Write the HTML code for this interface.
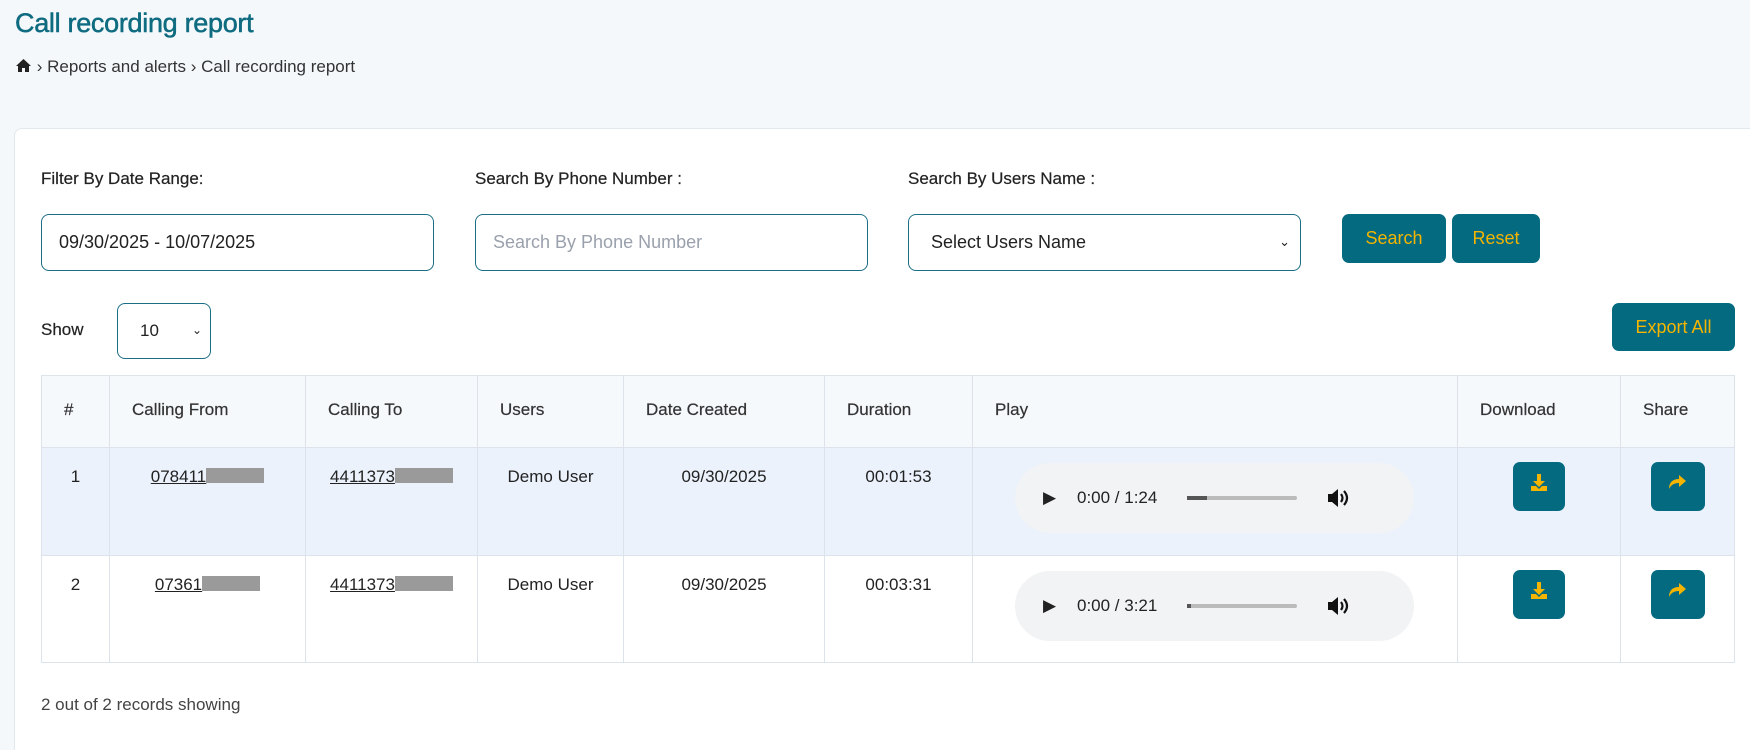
<!DOCTYPE html>
<html style="height:750px;overflow:hidden"><head><style>
*{box-sizing:border-box;margin:0;padding:0}
body{width:1750px;height:750px;background:#f4f8fb;font-family:"Liberation Sans",sans-serif;color:#222;position:relative;overflow:hidden}
.abs{position:absolute}
h1{position:absolute;left:15px;top:8px;font-size:27px;font-weight:normal;color:#0f6b80;letter-spacing:-0.3px;-webkit-text-stroke:0.5px #0f6b80}
.bc{position:absolute;left:15px;top:57px;font-size:17px;color:#333}
.card{position:absolute;left:14px;top:128px;width:1760px;height:622px;background:#fff;border:1px solid #e3e8ee;border-bottom:none;border-radius:8px 8px 0 0}
.lbl{position:absolute;font-size:17px;color:#222;top:169px;-webkit-text-stroke:0.2px #222}
.inp{position:absolute;top:214px;height:57px;width:393px;border:1.5px solid #1b6e84;border-radius:8px;font-size:18px;padding:0 17px;line-height:54px}
.btn{position:absolute;background:#036a80;color:#f4b400;border-radius:7px;font-size:18px;text-align:center}
table{position:absolute;left:41px;top:375px;width:1694px;border-collapse:collapse;font-size:17px}
td,th{border:1px solid #dde3ea;vertical-align:top}
th{background:#f5f9fc;height:72px;font-weight:normal;text-align:left;padding:24px 0 0 22px;color:#333;-webkit-text-stroke:0.2px #333}
td{padding-top:19px;text-align:center}
tr.r1 td{background:#ebf2fc;height:108px}
tr.r2 td{height:107px}
a{color:#222;text-decoration:underline}
.blur{display:inline-block;width:58px;height:15px;background:#9a9a9a;vertical-align:-1px}
.aud{margin:0 0 0 42px;width:399px;height:70px;border-radius:35px;background:#f1f3f4;position:relative;top:-4px;font-size:17px;text-align:left}
.ib{display:inline-block;width:52px;height:49px;background:#036a80;border-radius:7px;margin-top:-5px}
</style></head><body>
<h1>Call recording report</h1>
<div class="bc"><svg width="17" height="15" viewBox="0 0 17 15" style="vertical-align:-1px"><path d="M8.5 1L1 8h2v6h4v-4h3v4h4V8h2z" fill="#222"/></svg> › Reports and alerts › Call recording report</div>
<div class="card"></div>
<div class="lbl" style="left:41px">Filter By Date Range:</div>
<div class="lbl" style="left:475px">Search By Phone Number :</div>
<div class="lbl" style="left:908px">Search By Users Name :</div>
<div class="inp" style="left:41px">09/30/2025 - 10/07/2025</div>
<div class="inp" style="left:475px;color:#9aa0ac">Search By Phone Number</div>
<div class="inp" style="left:908px;padding-left:22px">Select Users Name<span style="position:absolute;right:10px;font-size:13px">&#8964;</span></div>
<div class="btn" style="left:1342px;top:214px;width:104px;height:49px;line-height:49px">Search</div>
<div class="btn" style="left:1452px;top:214px;width:88px;height:49px;line-height:49px">Reset</div>
<div class="btn" style="left:1612px;top:303px;width:123px;height:48px;line-height:48px">Export All</div>
<div class="abs" style="left:41px;top:320px;font-size:17px;-webkit-text-stroke:0.2px #222">Show</div>
<div class="abs" style="left:117px;top:303px;width:94px;height:56px;border:1.5px solid #1b6e84;border-radius:8px;font-size:17px;line-height:53px;padding-left:22px">10<span style="position:absolute;right:8px;font-size:12px">&#8964;</span></div>
<table>
<tr><th style="width:68px">#</th><th style="width:196px">Calling From</th><th style="width:172px">Calling To</th><th style="width:146px">Users</th><th style="width:201px">Date Created</th><th style="width:148px">Duration</th><th style="width:485px">Play</th><th style="width:163px">Download</th><th>Share</th></tr>
<tr class="r1"><td>1</td><td><a>078411<span class="blur"></span></a></td><td><a>4411373<span class="blur"></span></a></td><td>Demo User</td><td>09/30/2025</td><td>00:01:53</td><td style="text-align:left"><div class="aud"><span class="abs" style="left:28px;top:25px">&#9654;</span><span class="abs" style="left:62px;top:25px">0:00 / 1:24</span><span class="abs" style="left:172px;top:33px;width:110px;height:4px;background:#bbb;border-radius:2px"><span style="display:block;width:20px;height:4px;background:#555"></span></span><svg class="abs" style="left:311px;top:24px" width="24" height="22" viewBox="0 0 24 22"><path d="M2 7h4l6-5v18l-6-5H2z" fill="#111"/><path d="M15 7q3 4 0 8M18 4q6 7 0 14" stroke="#111" stroke-width="2.2" fill="none"/></svg></div></td><td><span class="ib"></span></td><td><span class="ib" style="width:54px"></span></td></tr>
<tr class="r2"><td>2</td><td><a>07361<span class="blur"></span></a></td><td><a>4411373<span class="blur"></span></a></td><td>Demo User</td><td>09/30/2025</td><td>00:03:31</td><td style="text-align:left"><div class="aud"><span class="abs" style="left:28px;top:25px">&#9654;</span><span class="abs" style="left:62px;top:25px">0:00 / 3:21</span><span class="abs" style="left:172px;top:33px;width:110px;height:4px;background:#bbb;border-radius:2px"><span style="display:block;width:4px;height:4px;background:#555"></span></span><svg class="abs" style="left:311px;top:24px" width="24" height="22" viewBox="0 0 24 22"><path d="M2 7h4l6-5v18l-6-5H2z" fill="#111"/><path d="M15 7q3 4 0 8M18 4q6 7 0 14" stroke="#111" stroke-width="2.2" fill="none"/></svg></div></td><td><span class="ib"></span></td><td><span class="ib" style="width:54px"></span></td></tr>
</table>
<div class="abs" style="left:41px;top:695px;font-size:17px;color:#444">2 out of 2 records showing</div>
<svg class="abs" style="left:1528px;top:472px" width="22" height="22" viewBox="0 0 22 22"><path d="M9 2h4v7h4l-6 6-6-6h4z M3 14h5l3 3 3-3h5v5H3z" fill="#f4b400"/></svg>
<svg class="abs" style="left:1528px;top:580px" width="22" height="22" viewBox="0 0 22 22"><path d="M9 2h4v7h4l-6 6-6-6h4z M3 14h5l3 3 3-3h5v5H3z" fill="#f4b400"/></svg>
<svg class="abs" style="left:1666px;top:472px" width="22" height="22" viewBox="0 0 22 22"><path d="M13 3l7 6-7 6v-4c-5 0-8 2-10 6 0-6 3-10 10-10z" fill="#f4b400"/></svg>
<svg class="abs" style="left:1666px;top:580px" width="22" height="22" viewBox="0 0 22 22"><path d="M13 3l7 6-7 6v-4c-5 0-8 2-10 6 0-6 3-10 10-10z" fill="#f4b400"/></svg>
</body></html>
